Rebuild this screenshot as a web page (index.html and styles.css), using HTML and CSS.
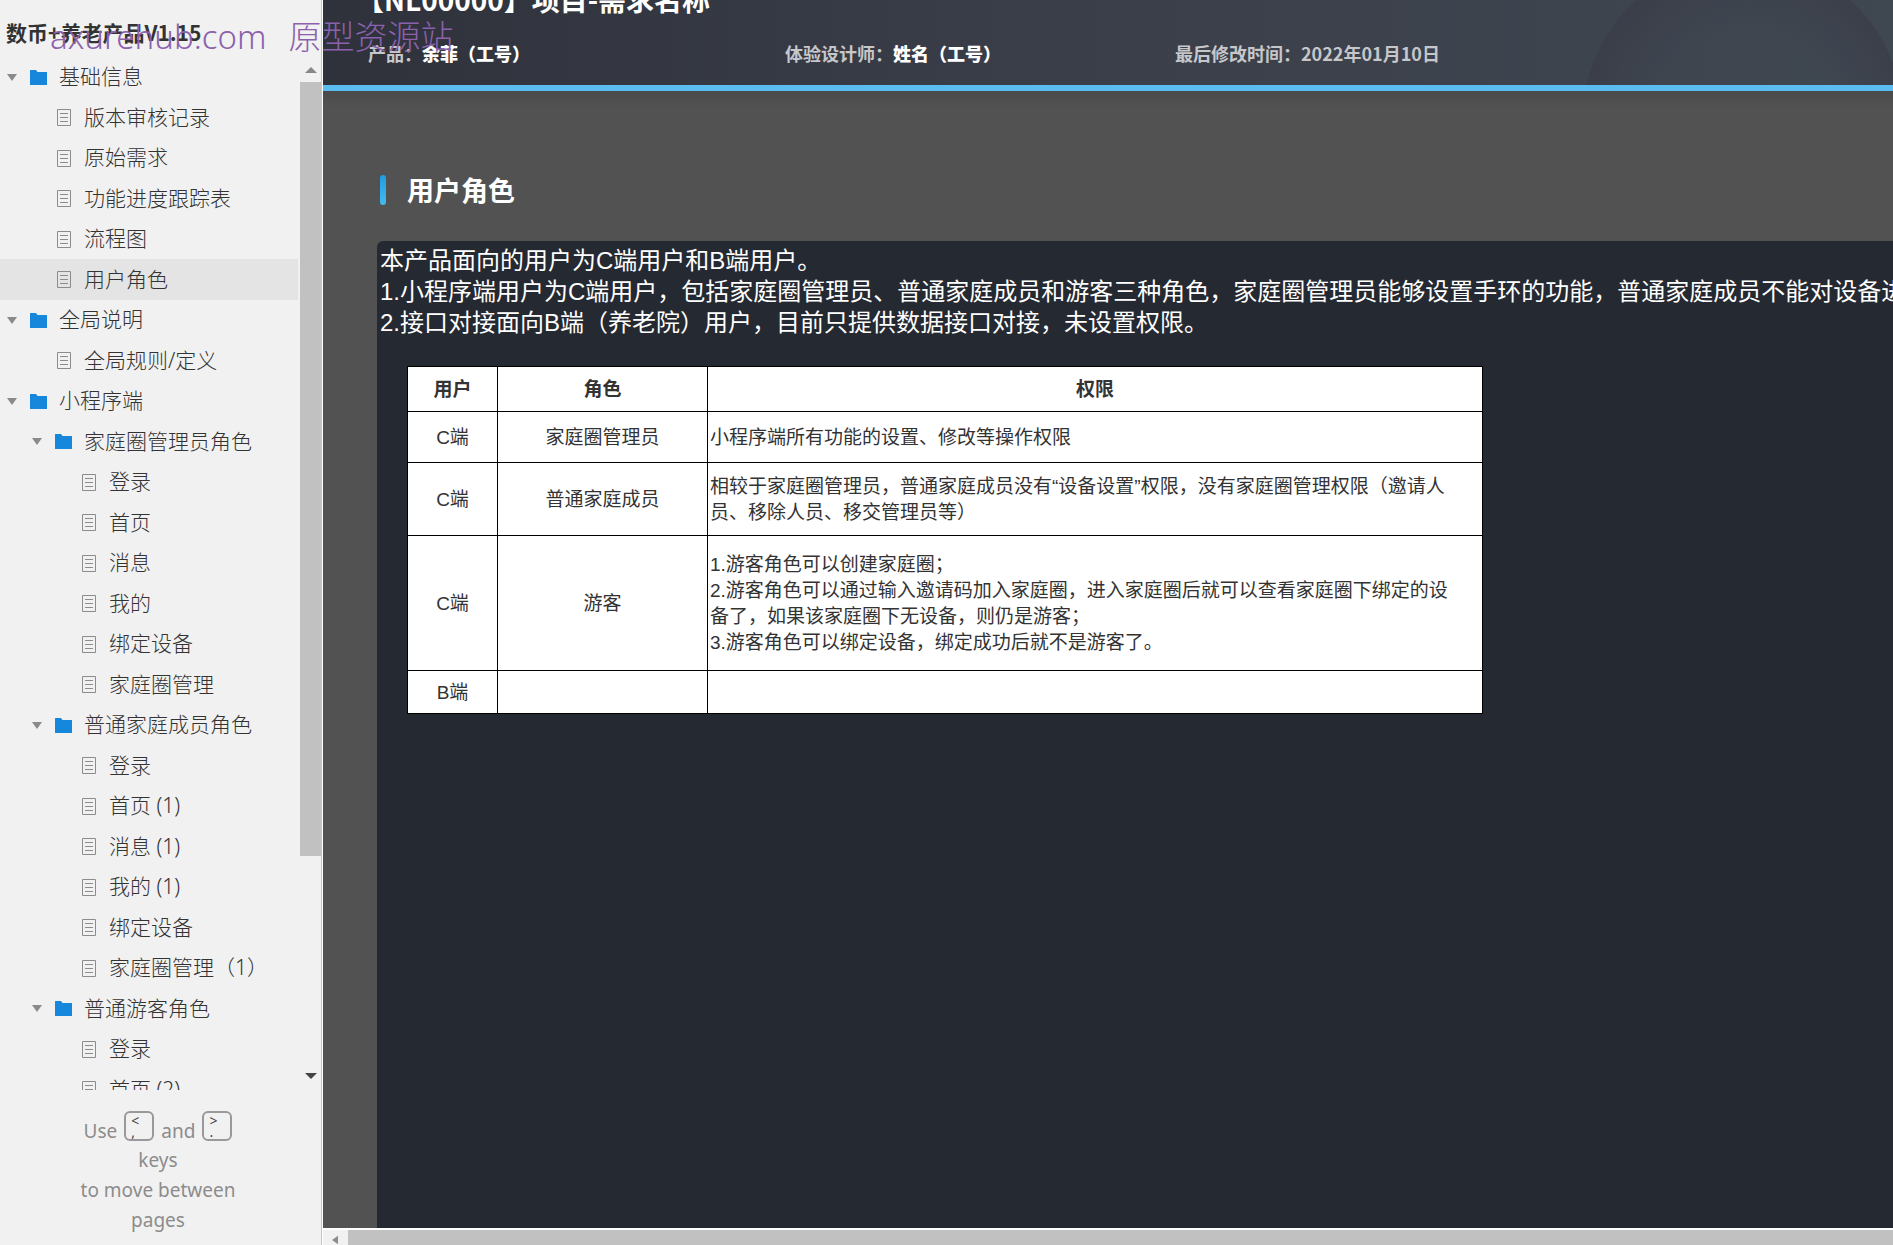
FILE: index.html
```html
<!DOCTYPE html>
<html lang="zh-CN">
<head>
<meta charset="utf-8">
<title>数币+养老产品V1.15</title>
<link rel="stylesheet" href="styles.css">
</head>
<body>
<svg class="sprite" aria-hidden="true">
  <symbol id="folder" viewBox="0 0 17 15"><path fill="#1787dc" d="M0 .5Q0 0 .5 0H6L7.500 2H16.500Q17 2 17 2.500V14.500Q17 15 16.500 15H.5Q0 15 0 14.500Z"/></symbol>
  <symbol id="page" viewBox="0 0 14 17"><path fill="none" stroke="#8c8c8c" d="M.5.5H13.500V16.500H.5ZM3 4.500H11M3 8.500H11M3 12.500H11"/></symbol>
  <symbol id="down" viewBox="0 0 10 7"><path fill="currentColor" d="M0 0H10L5 7Z"/></symbol>
</svg>
<div class="app">
  <aside class="sidebar">
    <h1 class="project">数币+养老产品V1.15</h1>
    <div class="tree-pane">
      <ul class="tree">
        <li class="row"><button class="toggle" aria-label="折叠"><svg><use href="#down"/></svg></button><svg class="icon"><use href="#folder"/></svg><a href="#">基础信息</a></li>
        <li class="row l1"><svg class="icon page"><use href="#page"/></svg><a href="#">版本审核记录</a></li>
        <li class="row l1"><svg class="icon page"><use href="#page"/></svg><a href="#">原始需求</a></li>
        <li class="row l1"><svg class="icon page"><use href="#page"/></svg><a href="#">功能进度跟踪表</a></li>
        <li class="row l1"><svg class="icon page"><use href="#page"/></svg><a href="#">流程图</a></li>
        <li class="row l1 current"><svg class="icon page"><use href="#page"/></svg><a href="#">用户角色</a></li>
        <li class="row"><button class="toggle" aria-label="折叠"><svg><use href="#down"/></svg></button><svg class="icon"><use href="#folder"/></svg><a href="#">全局说明</a></li>
        <li class="row l1"><svg class="icon page"><use href="#page"/></svg><a href="#">全局规则/定义</a></li>
        <li class="row"><button class="toggle" aria-label="折叠"><svg><use href="#down"/></svg></button><svg class="icon"><use href="#folder"/></svg><a href="#">小程序端</a></li>
        <li class="row l1"><button class="toggle" aria-label="折叠"><svg><use href="#down"/></svg></button><svg class="icon"><use href="#folder"/></svg><a href="#">家庭圈管理员角色</a></li>
        <li class="row l2"><svg class="icon page"><use href="#page"/></svg><a href="#">登录</a></li>
        <li class="row l2"><svg class="icon page"><use href="#page"/></svg><a href="#">首页</a></li>
        <li class="row l2"><svg class="icon page"><use href="#page"/></svg><a href="#">消息</a></li>
        <li class="row l2"><svg class="icon page"><use href="#page"/></svg><a href="#">我的</a></li>
        <li class="row l2"><svg class="icon page"><use href="#page"/></svg><a href="#">绑定设备</a></li>
        <li class="row l2"><svg class="icon page"><use href="#page"/></svg><a href="#">家庭圈管理</a></li>
        <li class="row l1"><button class="toggle" aria-label="折叠"><svg><use href="#down"/></svg></button><svg class="icon"><use href="#folder"/></svg><a href="#">普通家庭成员角色</a></li>
        <li class="row l2"><svg class="icon page"><use href="#page"/></svg><a href="#">登录</a></li>
        <li class="row l2"><svg class="icon page"><use href="#page"/></svg><a href="#">首页 (1)</a></li>
        <li class="row l2"><svg class="icon page"><use href="#page"/></svg><a href="#">消息 (1)</a></li>
        <li class="row l2"><svg class="icon page"><use href="#page"/></svg><a href="#">我的 (1)</a></li>
        <li class="row l2"><svg class="icon page"><use href="#page"/></svg><a href="#">绑定设备</a></li>
        <li class="row l2"><svg class="icon page"><use href="#page"/></svg><a href="#">家庭圈管理（1）</a></li>
        <li class="row l1"><button class="toggle" aria-label="折叠"><svg><use href="#down"/></svg></button><svg class="icon"><use href="#folder"/></svg><a href="#">普通游客角色</a></li>
        <li class="row l2"><svg class="icon page"><use href="#page"/></svg><a href="#">登录</a></li>
        <li class="row l2"><svg class="icon page"><use href="#page"/></svg><a href="#">首页 (2)</a></li>
      </ul>
      <div class="vbar">
        <svg class="cap up" viewBox="0 0 10 7" preserveAspectRatio="none"><use href="#down"/></svg>
        <div class="vtrack"><div class="vthumb"></div></div>
        <svg class="cap" viewBox="0 0 10 7" preserveAspectRatio="none"><use href="#down"/></svg>
      </div>
    </div>
    <div class="hint">
      <div class="keys">Use <kbd><span>&lt;</span><span>,</span></kbd> and <kbd><span>&gt;</span><span>.</span></kbd></div>
      <div>keys</div>
      <div>to move between</div>
      <div>pages</div>
    </div>
  </aside>
  <main class="main">
    <header class="banner">
      <h2 class="banner-title">【NL00000】项目-需求名称</h2>
      <div class="meta">
        <div>产品：<b>余菲（工号）</b></div>
        <div>体验设计师：<b>姓名（工号）</b></div>
        <div>最后修改时间：2022年01月10日</div>
      </div>
    </header>
    <div class="content">
      <h2 class="section">用户角色</h2>
      <section class="panel">
        <p class="intro">本产品面向的用户为C端用户和B端用户。<br>1.小程序端用户为C端用户，包括家庭圈管理员、普通家庭成员和游客三种角色，家庭圈管理员能够设置手环的功能，普通家庭成员不能对设备进<br>2.接口对接面向B端（养老院）用户，目前只提供数据接口对接，未设置权限。</p>
        <table class="roles">
          <colgroup><col class="c-user"><col class="c-role"><col></colgroup>
          <thead><tr class="h45"><th>用户</th><th>角色</th><th>权限</th></tr></thead>
          <tbody>
            <tr class="h51"><td>C端</td><td>家庭圈管理员</td><td>小程序端所有功能的设置、修改等操作权限</td></tr>
            <tr class="h73"><td>C端</td><td>普通家庭成员</td><td>相较于家庭圈管理员，普通家庭成员没有“设备设置”权限，没有家庭圈管理权限（邀请人<br>员、移除人员、移交管理员等）</td></tr>
            <tr class="h135"><td>C端</td><td>游客</td><td>1.游客角色可以创建家庭圈；<br>2.游客角色可以通过输入邀请码加入家庭圈，进入家庭圈后就可以查看家庭圈下绑定的设<br>备了，如果该家庭圈下无设备，则仍是游客；<br>3.游客角色可以绑定设备，绑定成功后就不是游客了。</td></tr>
            <tr class="h43"><td>B端</td><td></td><td></td></tr>
          </tbody>
        </table>
      </section>
    </div>
    <div class="hbar">
      <svg class="left" viewBox="0 0 7 10"><path fill="#8c8c8c" d="M7 0V10L0 5Z"/></svg>
      <div class="hthumb"></div>
    </div>
  </main>
  <div class="watermark"><span>axurehub.com</span><span>原型资源站</span></div>
</div>
</body>
</html>
```
FILE: styles.css
```css
* { box-sizing: border-box; }
body {
  margin: 0;
  overflow: hidden;
  font-family: "Noto Sans", "Noto Sans CJK SC", sans-serif;
  color: #333;
}
h1, h2, p, ul { margin: 0; padding: 0; }
a { color: inherit; text-decoration: none; }
.sprite { display: none; }

.app {
  position: relative;
  display: grid;
  grid-template-columns: 323px minmax(0, 1fr);
  height: 100vh;
}

/* Sidebar */
.sidebar {
  display: grid;
  grid-template-rows: 57px minmax(0, 1fr) 155px;
  background: #f1f1f1;
  border-right: 1px solid #fff;
  box-shadow: inset -1px 0 #c4c4c4;
  min-height: 0;
}
.project {
  padding: 16px 0 0 6px;
  font-family: "Noto Sans CJK SC", sans-serif;
  font-size: 21px;
  line-height: 32px;
  color: #333;
  white-space: nowrap;
}
.tree-pane {
  display: grid;
  grid-template-columns: minmax(0, 1fr) 21px;
  margin-right: 1px;
  overflow: hidden;
}
.tree {
  display: grid;
  grid-auto-rows: 40px 41px;
  list-style: none;
  font-weight: 300;
  font-size: 21px;
  line-height: 30px;
  min-height: 0;
}
.row {
  display: grid;
  grid-template-columns: 23px 17px 1fr;
  align-items: center;
  padding-left: 7px;
  white-space: nowrap;
}
.row a { grid-column: 3; padding: 0 0 2px 12px; }
.row.l1 { padding-left: 32px; }
.row.l2 { padding-left: 57px; }
.row .icon { grid-column: 2; }
.row.current { background: #e4e4e4; margin-right: 2px; }
.toggle {
  display: flex;
  padding: 0;
  border: 0;
  background: none;
  color: #8a8a8a;
}
.toggle svg { width: 10px; height: 7px; }
.icon { width: 17px; height: 15px; }
.icon.page { width: 14px; height: 17px; justify-self: center; }

.vbar {
  display: grid;
  grid-template-rows: 25px minmax(0, 1fr) 28px;
  justify-items: center;
  align-items: center;
  min-height: 0;
}
.cap { width: 12px; height: 6px; color: #444; }
.cap.up { color: #888; transform: rotate(180deg); }
.vtrack { width: 100%; height: 100%; }
.vthumb { height: 79%; background: #c1c1c1; }

.hint {
  padding: 17px 6px 0 0;
  font-size: 19px;
  line-height: 30px;
  color: #8c8c8c;
  text-align: center;
}
.keys {
  display: flex;
  justify-content: center;
  gap: 7px;
  height: 38px;
  line-height: 48px;
}
kbd {
  display: flex;
  flex-direction: column;
  width: 30px;
  height: 30px;
  margin-top: 4px;
  padding: 2px 0 0 5px;
  border: 2px solid #999;
  border-radius: 6px;
  font: 14px/11px "Noto Sans", sans-serif;
  color: #444;
  text-align: left;
}

/* Main page */
.main {
  display: grid;
  grid-template-rows: 91px minmax(0, 1fr) 17px;
  background: #525252;
  overflow: hidden;
  font-family: "Liberation Sans", "Noto Sans CJK SC", sans-serif;
}
.banner {
  display: flex;
  flex-direction: column;
  justify-content: flex-end;
  padding-left: 33px;
  overflow: hidden;
  border-bottom: 6px solid #5bbcef;
  background:
    radial-gradient(circle at 1420px 120px, rgba(58, 60, 72, 0) 90px, rgba(58, 60, 72, .7) 160px, transparent 161px),
    linear-gradient(to right, #2f323b, #3b3f4a 50%, #3f4751);
  font-family: "Noto Sans CJK SC", sans-serif;
  font-weight: 700;
}
.banner-title {
  flex: none;
  font-size: 28px;
  line-height: 40px;
  color: #fff;
  white-space: nowrap;
}
.meta {
  display: grid;
  grid-template-columns: 417px 390px 1fr;
  padding: 20px 0 18px 12px;
  font-size: 18px;
  line-height: 28px;
  color: #c6c7ca;
}
.meta b { color: #fff; }
.content {
  display: grid;
  grid-template-rows: auto minmax(0, 1fr);
  padding: 80px 0 0 54px;
  background: linear-gradient(#4a4a4a, #525252 16px);
  overflow: hidden;
}
.section {
  display: flex;
  align-items: center;
  gap: 21px;
  padding-left: 3px;
  margin-bottom: 32px;
  font: 700 27px/38px "Noto Sans CJK SC", sans-serif;
  color: #fff;
}
.section::before {
  content: "";
  width: 6px;
  height: 30px;
  border-radius: 3px;
  background: linear-gradient(#1f9be2, #45bbee);
}
.panel {
  padding: 4px 0 0 3px;
  border-radius: 6px 0 0 0;
  background: #252932;
  overflow: hidden;
}
.intro {
  font-size: 24px;
  line-height: 31px;
  color: #fff;
  white-space: nowrap;
}
.roles {
  width: 1076px;
  margin: 28px 0 0 27px;
  border-collapse: collapse;
  table-layout: fixed;
  background: #fff;
  font-size: 19px;
  line-height: 26px;
  color: #333;
}
.c-user { width: 90px; }
.c-role { width: 210px; }
.roles th, .roles td {
  padding: 2px 2px 0;
  border: 1px solid #000;
  text-align: center;
}
.roles td:last-child { text-align: left; white-space: nowrap; }
.h45 { height: 45px; }
.h51 { height: 51px; }
.h73 { height: 73px; }
.h135 { height: 135px; }
.h43 { height: 43px; }
.hbar {
  display: flex;
  gap: 10px;
  padding-left: 9px;
  border-top: 2px solid #fff;
  background: #f1f1f1;
}
.left { width: 6px; height: 10px; margin-top: 5px; }
.hthumb { flex: 1; background: #c1c1c1; }

.watermark {
  position: absolute;
  left: 50px;
  top: 13px;
  display: flex;
  gap: 22px;
  font: 300 33px/48px "Noto Sans", "Noto Sans CJK SC", sans-serif;
  color: #8b61ad;
  white-space: nowrap;
}
```
